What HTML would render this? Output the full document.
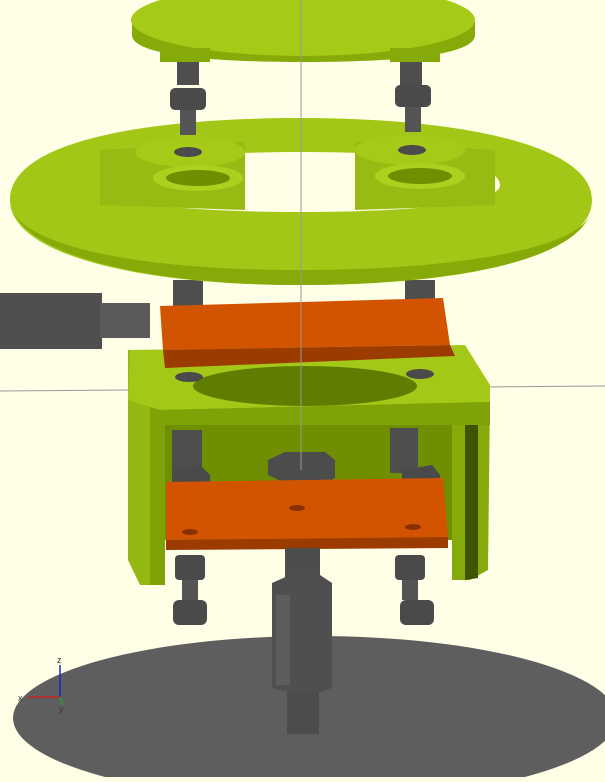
<!DOCTYPE html>
<html><head><meta charset="utf-8"><style>html,body{margin:0;padding:0;background:#fffee6;overflow:hidden}</style></head>
<body>
<svg width="605" height="777" viewBox="0 0 605 777" xmlns="http://www.w3.org/2000/svg">
<rect width="605" height="777" fill="#fffee6"/>
<ellipse cx="315" cy="718" rx="302" ry="82" fill="#5e5e5e"/>
<line x1="0" y1="391" x2="605" y2="386" stroke="#999" stroke-width="1"/>
<polygon points="150,405 460,400 460,540 150,540" fill="#6f8f00"/>
<polygon points="128,350 165,350 165,585 140,585 128,560" fill="#93b811"/>
<polygon points="150,400 165,400 165,585 150,585" fill="#7fa307"/>
<polygon points="452,400 490,395 488,570 470,580 452,580" fill="#86aa0b"/>
<polygon points="465,400 478,398 478,578 465,580" fill="#3f5400"/>
<polygon points="130,350 465,345 490,385 490,402 160,410 128,400" fill="#a4c818"/>
<ellipse cx="305" cy="386" rx="112" ry="20" fill="#5f7d00"/>
<polygon points="160,410 490,402 490,425 160,425" fill="#7ea306"/>
<rect x="172" y="430" width="30" height="45" fill="#4e4e4e"/>
<polygon points="172,470 200,465 210,475 210,505 180,510 172,500" fill="#4a4a4a"/>
<rect x="390" y="428" width="28" height="45" fill="#4e4e4e"/>
<polygon points="402,470 432,465 440,475 440,505 412,510 402,500" fill="#4a4a4a"/>
<polygon points="268,460 285,452 325,452 335,460 335,478 325,483 285,483 268,475" fill="#4c4c4c"/>
<ellipse cx="302" cy="488" rx="33" ry="10" fill="#4a4a4a"/>
<polygon points="166,482 443,478 448,537 166,540" fill="#d35400"/>
<polygon points="166,540 448,537 448,548 166,550" fill="#9b3b00"/>
<ellipse cx="190" cy="532" rx="8" ry="3" fill="#8a3000"/><ellipse cx="413" cy="527" rx="8" ry="3" fill="#8a3000"/><ellipse cx="297" cy="508" rx="8" ry="3" fill="#8a3000"/>
<rect x="175" y="555" width="30" height="25" rx="4" fill="#4a4a4a"/>
<rect x="182" y="580" width="16" height="20" fill="#555"/>
<rect x="173" y="600" width="34" height="25" rx="6" fill="#4a4a4a"/>
<rect x="395" y="555" width="30" height="25" rx="4" fill="#4a4a4a"/>
<rect x="402" y="580" width="16" height="20" fill="#555"/>
<rect x="400" y="600" width="34" height="25" rx="6" fill="#4a4a4a"/>
<rect x="285" y="548" width="35" height="35" fill="#4d4d4d"/>
<polygon points="272,583 290,575 320,575 332,583 332,688 320,692 290,692 272,688" fill="#4f4f4f"/>
<rect x="276" y="595" width="14" height="90" fill="#5c5c5c"/>
<rect x="287" y="692" width="32" height="42" fill="#4c4c4c"/>
<rect x="0" y="293" width="102" height="56" fill="#4f4f4f"/>
<rect x="100" y="303" width="50" height="35" fill="#5a5a5a"/>
<rect x="173" y="280" width="30" height="65" fill="#4e4e4e"/>
<rect x="405" y="280" width="30" height="60" fill="#4e4e4e"/>
<polygon points="160,306 443,298 450,345 163,350" fill="#d35400"/>
<polygon points="163,350 450,345 455,356 165,368" fill="#9b3b00"/>
<ellipse cx="189" cy="377" rx="14" ry="5" fill="#4a4a4a"/><ellipse cx="420" cy="374" rx="14" ry="5" fill="#4a4a4a"/>
<!-- torus -->
<path fill-rule="evenodd" fill="#a3c716" d="M10,200 C10,140 150,118 300,118 C460,118 592,145 592,200 C592,255 460,285 300,285 C140,285 10,255 10,200 Z M100,185 C100,160 200,152 300,152 C400,152 500,160 500,185 C500,205 400,212 300,212 C200,212 100,205 100,185 Z"/>
<path fill="#86aa08" d="M15,215 C40,260 160,285 300,285 C450,285 570,262 590,215 C575,250 450,270 300,270 C150,270 40,250 15,215 Z"/>
<!-- bosses -->
<polygon points="100,150 245,142 245,210 100,205" fill="#97bb12"/>
<ellipse cx="190" cy="152" rx="55" ry="15" fill="#a6ca18"/>
<ellipse cx="198" cy="178" rx="45" ry="13" fill="#acd01e"/><ellipse cx="198" cy="178" rx="32" ry="8" fill="#6f8f00"/>
<polygon points="355,142 495,150 495,205 355,210" fill="#97bb12"/>
<ellipse cx="410" cy="150" rx="55" ry="15" fill="#a6ca18"/>
<ellipse cx="420" cy="176" rx="45" ry="13" fill="#acd01e"/><ellipse cx="420" cy="176" rx="32" ry="8" fill="#6f8f00"/>
<ellipse cx="188" cy="152" rx="14" ry="5" fill="#4a4a4a"/><ellipse cx="412" cy="150" rx="14" ry="5" fill="#4a4a4a"/>
<rect x="177" y="60" width="22" height="25" fill="#4e4e4e"/>
<rect x="170" y="88" width="36" height="22" rx="5" fill="#4a4a4a"/>
<rect x="180" y="110" width="16" height="25" fill="#555"/>
<rect x="400" y="60" width="22" height="25" fill="#4e4e4e"/>
<rect x="395" y="85" width="36" height="22" rx="5" fill="#4a4a4a"/>
<rect x="405" y="107" width="16" height="25" fill="#555"/>
<path fill="#86aa08" d="M132,22 L132,35 C132,55 210,62 303,62 C400,62 475,55 475,35 L475,22 Z"/>
<ellipse cx="303" cy="20" rx="172" ry="36" fill="#a6ca18"/>
<rect x="160" y="48" width="50" height="14" fill="#86aa08"/><rect x="390" y="48" width="50" height="14" fill="#86aa08"/>
<line x1="301" y1="0" x2="301" y2="470" stroke="#999" stroke-width="1"/>
<line x1="60" y1="697" x2="60" y2="665" stroke="#2222cc" stroke-width="1.5"/>
<line x1="60" y1="697" x2="28" y2="697" stroke="#cc2222" stroke-width="1.5"/>
<line x1="60" y1="697" x2="63" y2="705" stroke="#22aa22" stroke-width="1.5"/>
<text x="57" y="663" font-family="Liberation Sans, sans-serif" font-size="9" fill="#333">z</text>
<text x="18" y="701" font-family="Liberation Sans, sans-serif" font-size="9" fill="#333">x</text>
<text x="59" y="712" font-family="Liberation Sans, sans-serif" font-size="9" fill="#333">y</text>
</svg>
</body></html>
